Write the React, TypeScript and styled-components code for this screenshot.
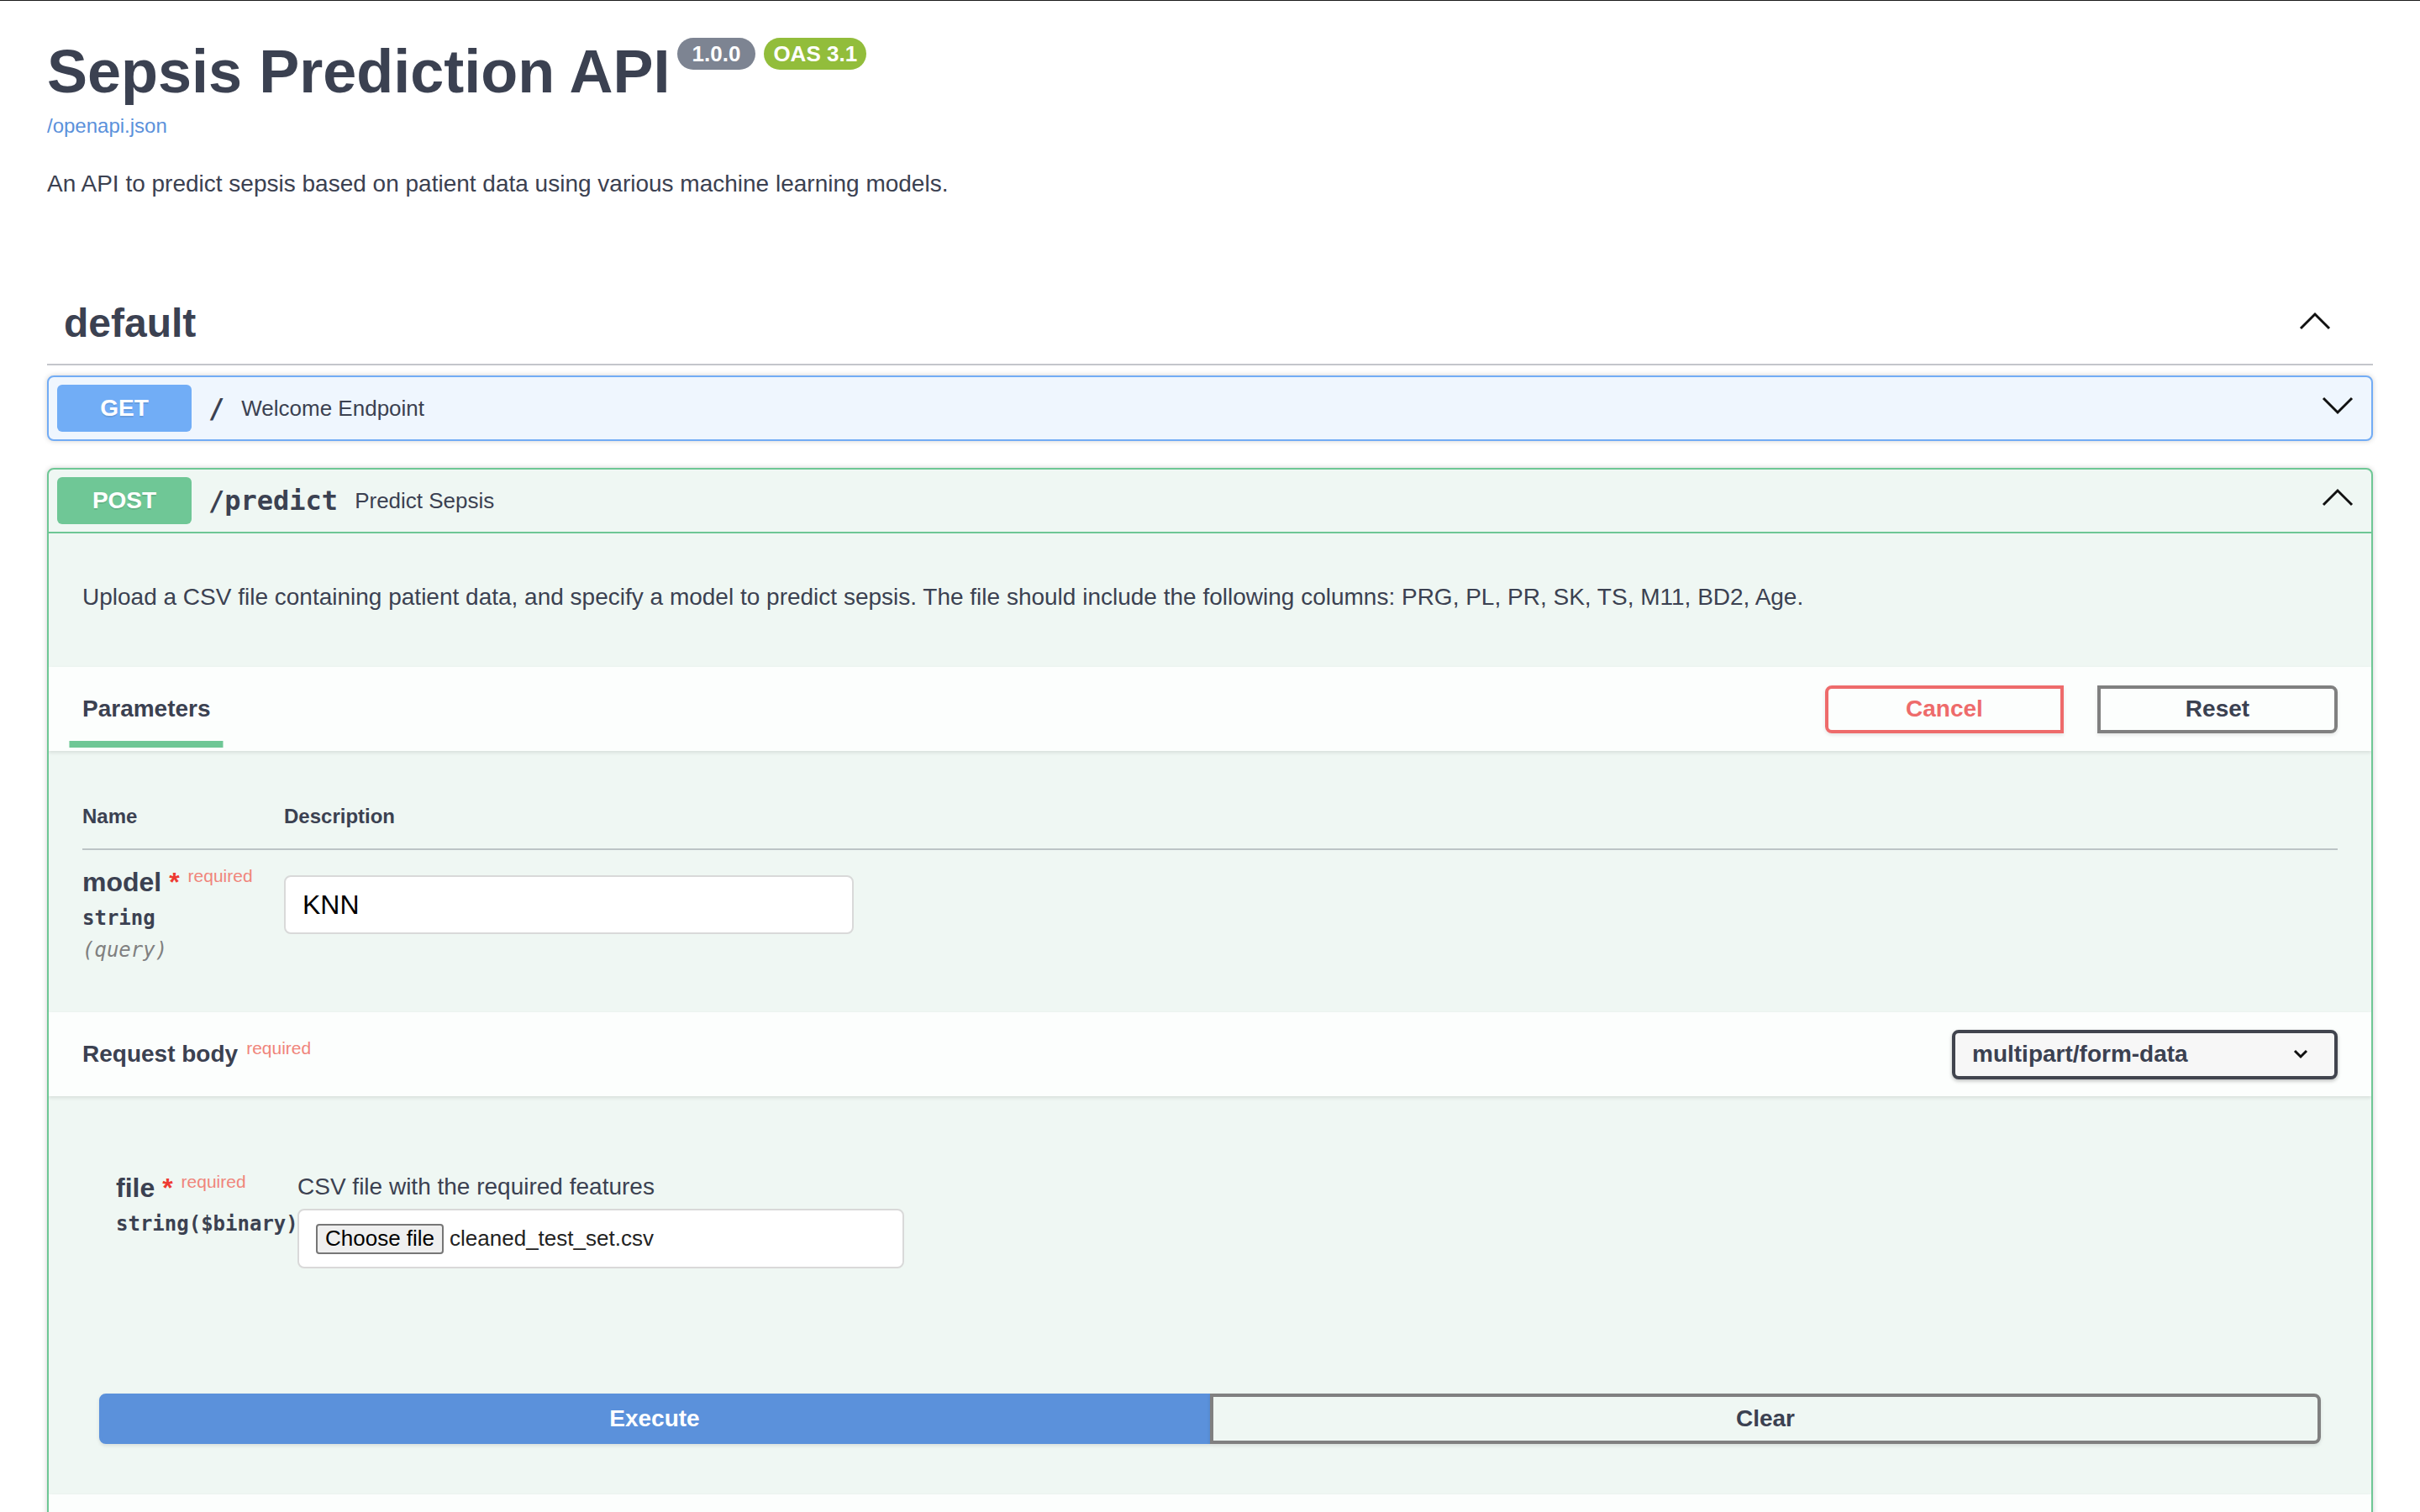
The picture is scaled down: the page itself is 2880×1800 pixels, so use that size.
import styled, { createGlobalStyle } from "styled-components";

const GlobalStyle = createGlobalStyle`
  html, body {
    margin: 0;
    padding: 0;
    background: #fff;
  }
  body {
    font-family: "Liberation Sans", Arial, sans-serif;
    color: #3b4151;
  }
  * {
    box-sizing: border-box;
  }
`;

const mono = `"DejaVu Sans Mono", "Liberation Mono", monospace`;

const Page = styled.div`
  border-top: 1px solid #1b1b1b;
  padding: 0 56px;
  min-height: 1800px;
`;

const Info = styled.div`
  padding-top: 43px;
`;

const Title = styled.h2`
  display: flex;
  align-items: flex-start;
  margin: 0;
  font-size: 72px;
  line-height: 82px;
  font-weight: 700;
  color: #3b4151;
`;

const Badge = styled.span<{ $bg: string; $pad: number; $gap: number }>`
  margin: 1px 0 0 ${(p) => p.$gap}px;
  height: 38px;
  line-height: 38px;
  padding: 0 ${(p) => p.$pad}px;
  border-radius: 114px;
  background: ${(p) => p.$bg};
  color: #fff;
  font-size: 26px;
  font-weight: 700;
`;

const SpecLink = styled.a`
  display: inline-block;
  margin-top: 10px;
  font-size: 24px;
  line-height: 28px;
  color: #5b91db;
  text-decoration: none;
`;

const InfoText = styled.p`
  margin: 38px 0 0;
  font-size: 28px;
  line-height: 34px;
`;

const TagHeader = styled.div`
  display: flex;
  align-items: center;
  justify-content: space-between;
  margin: 101px 0 12px;
  padding: 20px 49px 20px 20px;
  border-bottom: 2px solid #c4c6cb;
`;

const TagName = styled.h3`
  margin: 0;
  font-size: 48px;
  line-height: 56px;
  font-weight: 700;
  color: #3b4151;
`;

const ChevronSvg = styled.svg<{ $mr?: number }>`
  width: 40px;
  height: 40px;
  flex: none;
  margin-right: ${(p) => p.$mr ?? 0}px;
`;

function Chevron({ points, mr }: { points: string; mr?: number }) {
  return (
    <ChevronSvg viewBox="0 0 40 40" $mr={mr}>
      <polyline points={points} fill="none" stroke="#111" strokeWidth="3" />
    </ChevronSvg>
  );
}

const Opblock = styled.div<{ $color: string; $bg: string; $mb: number }>`
  border: 2px solid ${(p) => p.$color};
  background: ${(p) => p.$bg};
  border-radius: 8px;
  box-shadow: 0 0 6px rgba(0, 0, 0, 0.19);
  margin-bottom: ${(p) => p.$mb}px;
  overflow: hidden;
`;

const Summary = styled.div<{ $line?: string }>`
  display: flex;
  align-items: center;
  padding: 9px 0 9px 10px;
  border-bottom: ${(p) => (p.$line ? `2px solid ${p.$line}` : "none")};
`;

const Method = styled.span<{ $bg: string }>`
  min-width: 160px;
  height: 56px;
  display: flex;
  align-items: center;
  justify-content: center;
  border-radius: 6px;
  background: ${(p) => p.$bg};
  color: #fff;
  font-size: 28px;
  font-weight: 700;
  text-shadow: 0 2px 0 rgba(0, 0, 0, 0.1);
`;

const Path = styled.span`
  padding: 0 20px;
  font-family: ${mono};
  font-size: 32px;
  font-weight: 700;
  color: #3b4151;
`;

const SummaryText = styled.span`
  flex: 1;
  font-size: 26px;
  color: #3b4151;
`;

const Description = styled.p`
  margin: 0;
  padding: 59px 40px 66px;
  font-size: 28px;
  line-height: 34px;
  color: #3b4151;
`;

const SectionHeader = styled.div`
  display: flex;
  align-items: center;
  justify-content: space-between;
  min-height: 100px;
  padding: 0 40px;
  background: rgba(255, 255, 255, 0.8);
  box-shadow: 0 2px 4px rgba(0, 0, 0, 0.1);
`;

const TabLabel = styled.h4`
  position: relative;
  margin: 0;
  font-size: 28px;
  line-height: 32px;
  font-weight: 700;
  color: #3b4151;

  &::after {
    content: "";
    position: absolute;
    left: 50%;
    bottom: -30px;
    width: 120%;
    height: 8px;
    transform: translateX(-50%);
    background: #6ec795;
  }
`;

const HeaderTitle = styled.h4`
  margin: 0;
  font-size: 28px;
  line-height: 32px;
  font-weight: 700;
  color: #3b4151;
`;

const ButtonRow = styled.div`
  display: flex;
  gap: 40px;
`;

const OutlineButton = styled.button<{ $tone: "cancel" | "reset" }>`
  width: ${(p) => (p.$tone === "cancel" ? 284 : 286)}px;
  height: 57px;
  padding: 0;
  background: transparent;
  border: 4px solid ${(p) => (p.$tone === "cancel" ? "#ee6b6b" : "#808080")};
  border-radius: ${(p) => (p.$tone === "cancel" ? "8px 0 0 8px" : "0 8px 8px 0")};
  box-shadow: 0 2px 4px rgba(0, 0, 0, 0.1);
  color: ${(p) => (p.$tone === "cancel" ? "#ee6b6b" : "#3b4151")};
  font-family: "Liberation Sans", Arial, sans-serif;
  font-size: 28px;
  font-weight: 700;
`;

const ParamsBody = styled.div`
  padding: 40px 40px 60px;
`;

const ParamGrid = styled.div<{ $name: number }>`
  display: grid;
  grid-template-columns: ${(p) => p.$name}px 1fr;
`;

const HeadCell = styled.div`
  padding: 24px 0;
  font-size: 24px;
  line-height: 28px;
  font-weight: 700;
  color: #3b4151;
  border-bottom: 2px solid rgba(59, 65, 81, 0.28);
`;

const Cell = styled.div<{ $top?: number }>`
  padding-top: ${(p) => p.$top ?? 20}px;
`;

const ParamName = styled.div`
  font-size: 32px;
  line-height: 37px;
  font-weight: 700;
  color: #3b4151;
  white-space: nowrap;
`;

const Star = styled.span`
  color: #ee3b32;
`;

const Required = styled.sup`
  position: relative;
  top: 1px;
  padding-left: 10px;
  font-size: 21px;
  font-weight: 400;
  color: #f0857b;
  vertical-align: super;
  line-height: 0;
`;

const ParamType = styled.div`
  padding: 10px 0;
  font-family: ${mono};
  font-size: 24px;
  line-height: 28px;
  font-weight: 700;
  color: #3b4151;
  white-space: nowrap;
`;

const ParamIn = styled.div`
  font-family: ${mono};
  font-size: 24px;
  line-height: 28px;
  font-style: italic;
  color: #808080;
`;

const TextInput = styled.input`
  display: block;
  width: 678px;
  height: 70px;
  margin-top: 10px;
  padding: 0 20px;
  border: 2px solid #d9d9d9;
  border-radius: 8px;
  background: #fff;
  font-family: "Liberation Sans", Arial, sans-serif;
  font-size: 32px;
  color: #000;
  outline: none;
`;

const Select = styled.div`
  display: flex;
  align-items: center;
  justify-content: space-between;
  width: 459px;
  height: 59px;
  padding: 0 31px 0 20px;
  border: 4px solid #41444e;
  border-radius: 8px;
  background: #f7f7f7;
  box-shadow: 0 2px 4px rgba(0, 0, 0, 0.25);
  font-size: 28px;
  font-weight: 700;
  color: #3b4151;
`;

const SmallChevron = styled.svg`
  width: 18px;
  height: 12px;
`;

const BodyContent = styled.div`
  padding: 91px 40px 89px 80px;
`;

const FieldText = styled.div`
  font-size: 28px;
  line-height: 34px;
  color: #3b4151;
`;

const FileBox = styled.div`
  display: flex;
  align-items: center;
  gap: 7px;
  width: 722px;
  height: 71px;
  margin-top: 9px;
  padding: 0 20px;
  border: 2px solid #d9d9d9;
  border-radius: 8px;
  background: #fff;
  font-size: 26px;
  color: #222;
`;

const ChooseButton = styled.button`
  height: 36px;
  padding: 0 9px;
  border: 2px solid #767676;
  border-radius: 4px;
  background: #efefef;
  font-family: "Liberation Sans", Arial, sans-serif;
  font-size: 26px;
  color: #000;
`;

const ExecuteGroup = styled.div`
  display: flex;
  padding: 60px;
`;

const WideButton = styled.button<{ $primary?: boolean }>`
  flex: 1;
  height: 60px;
  border: 4px solid ${(p) => (p.$primary ? "#5b91db" : "#808080")};
  border-radius: ${(p) => (p.$primary ? "8px 0 0 8px" : "0 8px 8px 0")};
  background: ${(p) => (p.$primary ? "#5b91db" : "transparent")};
  box-shadow: 0 2px 4px rgba(0, 0, 0, 0.1);
  color: ${(p) => (p.$primary ? "#fff" : "#3b4151")};
  font-family: "Liberation Sans", Arial, sans-serif;
  font-size: 28px;
  font-weight: 700;
`;

const ResponsesHeader = styled.div`
  height: 100px;
  background: rgba(255, 255, 255, 0.8);
  box-shadow: 0 2px 4px rgba(0, 0, 0, 0.1);
`;

const ResponsesBody = styled.div`
  height: 300px;
`;

export default function App() {
  return (
    <>
      <GlobalStyle />
      <Page>
        <Info>
          <Title>
            Sepsis Prediction API
            <Badge $bg="#7d8492" $pad={18} $gap={8}>
              1.0.0
            </Badge>
            <Badge $bg="#92bd3b" $pad={11} $gap={10}>
              OAS 3.1
            </Badge>
          </Title>
          <SpecLink href="#">/openapi.json</SpecLink>
          <InfoText>
            An API to predict sepsis based on patient data using various machine learning models.
          </InfoText>
        </Info>

        <TagHeader>
          <TagName>default</TagName>
          <Chevron points="3,26 20,9 37,26" />
        </TagHeader>

        <Opblock $color="#72acf5" $bg="#eff6fe" $mb={32}>
          <Summary>
            <Method $bg="#71adf6">GET</Method>
            <Path>/</Path>
            <SummaryText>Welcome Endpoint</SummaryText>
            <Chevron points="3,8 20,25 37,8" mr={20} />
          </Summary>
        </Opblock>

        <Opblock $color="#6ec795" $bg="#eff7f3" $mb={30}>
          <Summary $line="#6ec795">
            <Method $bg="#6fc796">POST</Method>
            <Path>/predict</Path>
            <SummaryText>Predict Sepsis</SummaryText>
            <Chevron points="3,25 20,8 37,25" mr={20} />
          </Summary>

          <Description>
            Upload a CSV file containing patient data, and specify a model to predict sepsis. The file
            should include the following columns: PRG, PL, PR, SK, TS, M11, BD2, Age.
          </Description>

          <SectionHeader>
            <TabLabel>Parameters</TabLabel>
            <ButtonRow>
              <OutlineButton $tone="cancel">Cancel</OutlineButton>
              <OutlineButton $tone="reset">Reset</OutlineButton>
            </ButtonRow>
          </SectionHeader>

          <ParamsBody>
            <ParamGrid $name={240}>
              <HeadCell>Name</HeadCell>
              <HeadCell>Description</HeadCell>
              <Cell>
                <ParamName>
                  model<Star>&nbsp;*</Star>
                  <Required>required</Required>
                </ParamName>
                <ParamType>string</ParamType>
                <ParamIn>(query)</ParamIn>
              </Cell>
              <Cell>
                <TextInput defaultValue="KNN" readOnly />
              </Cell>
            </ParamGrid>
          </ParamsBody>

          <SectionHeader>
            <HeaderTitle>
              Request body<Required>required</Required>
            </HeaderTitle>
            <Select>
              multipart/form-data
              <SmallChevron viewBox="0 0 18 12">
                <polyline points="2,2 9,9 16,2" fill="none" stroke="#111" strokeWidth="3" />
              </SmallChevron>
            </Select>
          </SectionHeader>

          <BodyContent>
            <ParamGrid $name={216}>
              <Cell $top={0}>
                <ParamName>
                  file<Star>&nbsp;*</Star>
                  <Required>required</Required>
                </ParamName>
                <ParamType>string($binary)</ParamType>
              </Cell>
              <Cell $top={0}>
                <FieldText>CSV file with the required features</FieldText>
                <FileBox>
                  <ChooseButton>Choose file</ChooseButton>
                  cleaned_test_set.csv
                </FileBox>
              </Cell>
            </ParamGrid>
          </BodyContent>

          <ExecuteGroup>
            <WideButton $primary>Execute</WideButton>
            <WideButton>Clear</WideButton>
          </ExecuteGroup>

          <ResponsesHeader />
          <ResponsesBody />
        </Opblock>
      </Page>
    </>
  );
}
